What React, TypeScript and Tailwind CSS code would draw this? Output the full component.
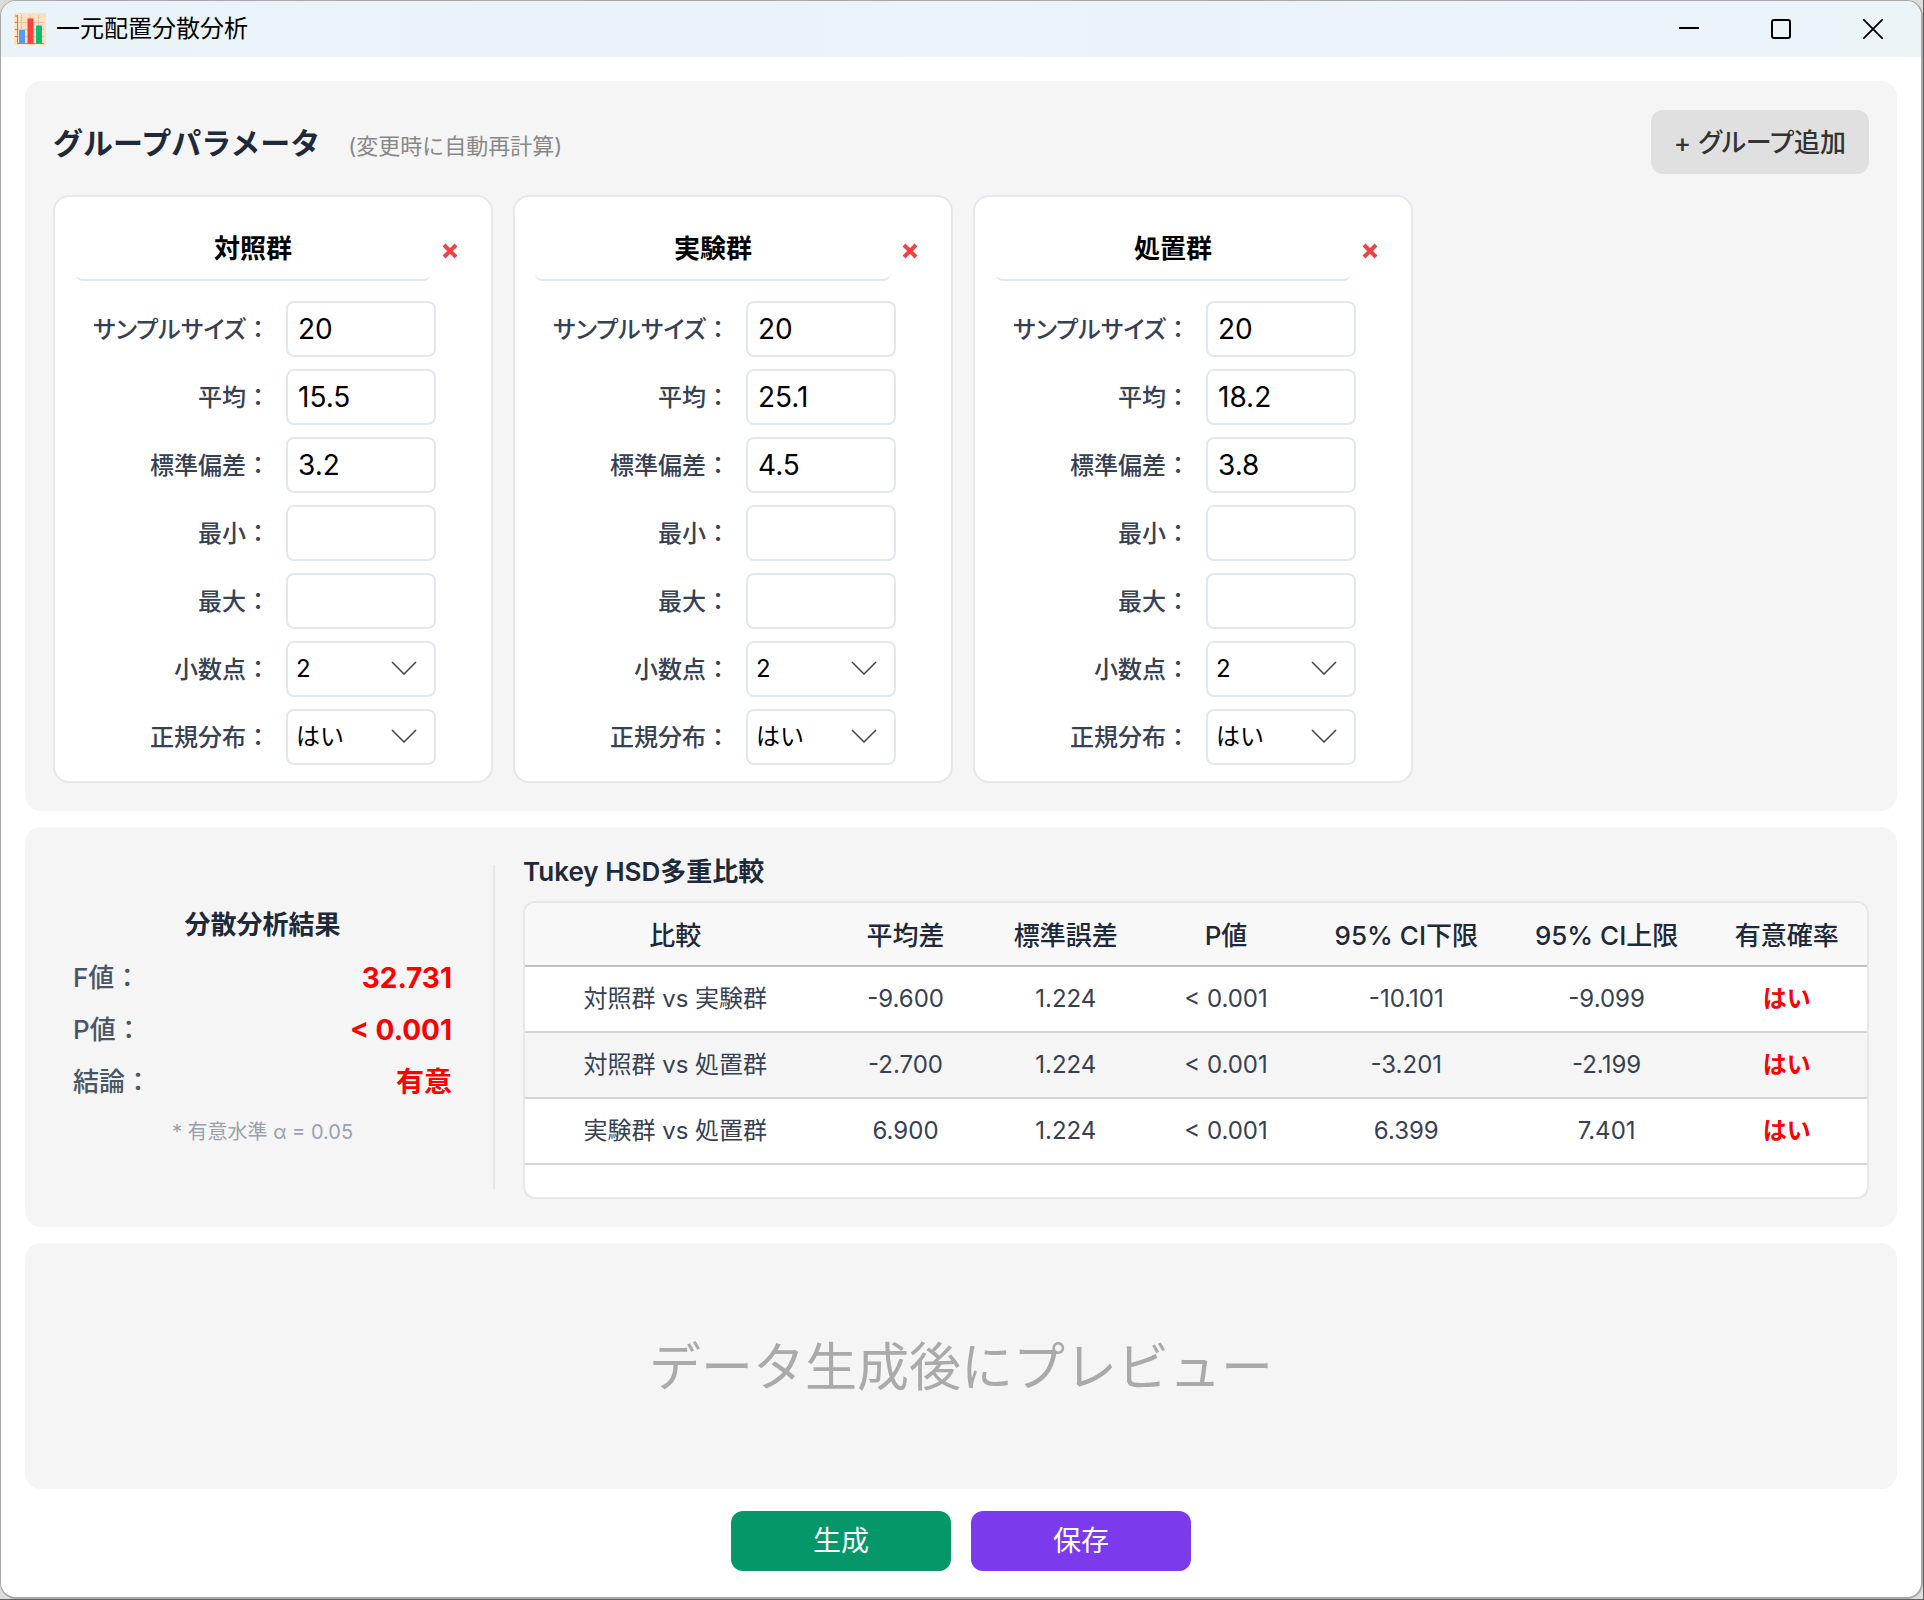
import { useId, useState } from "react";
import clsx from "clsx";

type Group = {
  id: number;
  name: string;
  size: string;
  mean: string;
  sd: string;
  min: string;
  max: string;
};

type Comparison = {
  pair: string;
  diff: string;
  se: string;
  p: string;
  lower: string;
  upper: string;
  significant: string;
};

const INITIAL_GROUPS: Group[] = [
  { id: 1, name: "対照群", size: "20", mean: "15.5", sd: "3.2", min: "", max: "" },
  { id: 2, name: "実験群", size: "20", mean: "25.1", sd: "4.5", min: "", max: "" },
  { id: 3, name: "処置群", size: "20", mean: "18.2", sd: "3.8", min: "", max: "" },
];

const FIELDS: { key: "size" | "mean" | "sd" | "min" | "max"; label: string }[] = [
  { key: "size", label: "サンプルサイズ" },
  { key: "mean", label: "平均" },
  { key: "sd", label: "標準偏差" },
  { key: "min", label: "最小" },
  { key: "max", label: "最大" },
];

const COLUMNS = [
  { label: "比較", width: "w-[300px]" },
  { label: "平均差", width: "w-[160px]" },
  { label: "標準誤差", width: "w-[160px]" },
  { label: "P値", width: "w-[160px]" },
  { label: "95% CI下限", width: "w-[200px]" },
  { label: "95% CI上限", width: "w-[200px]" },
  { label: "有意確率", width: "w-[160px]" },
];

const COMPARISONS: Comparison[] = [
  { pair: "対照群 vs 実験群", diff: "-9.600", se: "1.224", p: "< 0.001", lower: "-10.101", upper: "-9.099", significant: "はい" },
  { pair: "対照群 vs 処置群", diff: "-2.700", se: "1.224", p: "< 0.001", lower: "-3.201", upper: "-2.199", significant: "はい" },
  { pair: "実験群 vs 処置群", diff: "6.900", se: "1.224", p: "< 0.001", lower: "6.399", upper: "7.401", significant: "はい" },
];

function ChartIcon() {
  return (
    <svg width="32" height="32" viewBox="0 0 32 32" aria-hidden="true">
      <rect width="32" height="32" rx="1" fill="#fee0c0" />
      <path d="M2 9.5h28M2 16.5h28M2 23.5h28M7.5 2v28M16 2v28M24.5 2v28" stroke="#dcc4ac" strokeWidth="1" />
      <path d="M3.500 2v28.500H30M1 3h3M1 9.5h3M1 16.5h3M1 23.5h3" fill="none" stroke="#a08f80" strokeWidth="1" />
      <rect x="5" y="17" width="6" height="13.500" fill="#4f9cf9" />
      <rect x="13.500" y="5.500" width="6" height="25" fill="#f8403f" />
      <rect x="22" y="12.500" width="6" height="18" fill="#0cbc70" />
    </svg>
  );
}

function TitleBar() {
  return (
    <header className="flex h-14 items-center justify-between bg-linear-to-r from-[#eaf4f8] via-[#ebf3fb] to-[#ebf5f8] pr-0.5 pl-[13px]">
      <div className="flex items-center gap-2.5">
        <ChartIcon />
        <h1 className="text-2xl text-black">一元配置分散分析</h1>
      </div>
      <div className="flex h-full">
        <button type="button" aria-label="最小化" className="flex w-[92px] items-center justify-center">
          <svg width="20" height="20" viewBox="0 0 20 20">
            <path d="M0 9h20" stroke="#000" strokeWidth="2" />
          </svg>
        </button>
        <button type="button" aria-label="最大化" className="flex w-[92px] items-center justify-center">
          <svg width="20" height="20" viewBox="0 0 20 20">
            <rect x="1" y="1" width="18" height="18" rx="2" fill="none" stroke="#000" strokeWidth="2" />
          </svg>
        </button>
        <button type="button" aria-label="閉じる" className="flex w-[92px] items-center justify-center">
          <svg width="20" height="20" viewBox="0 0 20 20">
            <path d="M0 0l20 20M20 0L0 20" stroke="#000" strokeWidth="1.800" />
          </svg>
        </button>
      </div>
    </header>
  );
}

function FieldLabel({ htmlFor, text }: { htmlFor: string; text: string }) {
  return (
    <label htmlFor={htmlFor} className="flex-1 pt-0.5 text-right text-2xl font-medium whitespace-nowrap text-gray-700">
      <span className="[font-feature-settings:'palt']">{text}</span>：
    </label>
  );
}

function SelectField({ label, options }: { label: string; options: string[] }) {
  const id = useId();
  return (
    <div className="flex items-center gap-4">
      <FieldLabel htmlFor={id} text={label} />
      <div className="relative">
        <select
          id={id}
          className="block h-14 w-[150px] appearance-none rounded-lg border-2 border-slate-200 bg-white px-2 text-2xl text-black"
        >
          {options.map((o) => (
            <option key={o}>{o}</option>
          ))}
        </select>
        <svg
          width="26"
          height="14"
          viewBox="0 0 26 14"
          className="pointer-events-none absolute top-5 right-[19px]"
          aria-hidden="true"
        >
          <path d="M1 1l12 12L25 1" fill="none" stroke="#444" strokeWidth="1.500" />
        </svg>
      </div>
    </div>
  );
}

function GroupCard({ group, onRemove }: { group: Group; onRemove: () => void }) {
  const id = useId();
  return (
    <div className="w-[440px] rounded-2xl border-2 border-gray-200 bg-white px-5 pt-5 pb-4">
      <div className="flex items-center">
        <input
          aria-label="グループ名"
          defaultValue={group.name}
          className="h-16 w-[356px] rounded-lg border-b-2 border-slate-200 pb-1 text-center text-[26px] font-bold text-black"
        />
        <button
          type="button"
          aria-label={`${group.name}を削除`}
          onClick={onRemove}
          className="flex h-10 w-[38px] items-center justify-center pt-1"
        >
          <svg width="16" height="16" viewBox="0 0 16 16">
            <path d="M2 2l12 12M14 2L2 14" stroke="#ef4444" strokeWidth="4" />
          </svg>
        </button>
      </div>
      <div className="mt-5 mr-[35px] flex flex-col gap-3">
        {FIELDS.map((f) => (
          <div key={f.key} className="flex items-center gap-4">
            <FieldLabel htmlFor={`${id}-${f.key}`} text={f.label} />
            <input
              id={`${id}-${f.key}`}
              defaultValue={group[f.key]}
              className="h-14 w-[150px] rounded-lg border-2 border-slate-200 bg-white px-2.5 text-[28px] text-black"
            />
          </div>
        ))}
        <SelectField label="小数点" options={["2", "0", "1", "3"]} />
        <SelectField label="正規分布" options={["はい", "いいえ"]} />
      </div>
    </div>
  );
}

function ResultRow({ label, value }: { label: string; value: string }) {
  return (
    <div className="flex h-[52px] items-center justify-between">
      <dt className="text-[26px] font-medium text-gray-600">{label}：</dt>
      <dd className="text-[28px] font-bold text-[#ff0000]">{value}</dd>
    </div>
  );
}

function ComparisonTable() {
  return (
    <div className="flex-1 overflow-hidden rounded-xl border-2 border-gray-200 bg-white">
      <table className="w-full table-fixed border-collapse text-center">
        <thead>
          <tr className="h-[63px] border-b-2 border-[#c0c2c8] bg-[#f8f8f8]">
            {COLUMNS.map((c) => (
              <th key={c.label} className={clsx(c.width, "pt-0.5 text-[26px] font-medium text-gray-800")}>
                {c.label}
              </th>
            ))}
          </tr>
        </thead>
        <tbody>
          {COMPARISONS.map((row, i) => (
            <tr
              key={row.pair}
              className={clsx("h-[66px] border-b-2 border-[#d4d5d7] text-2xl text-gray-700", i % 2 === 1 && "bg-neutral-100")}
            >
              <td>{row.pair}</td>
              <td>{row.diff}</td>
              <td>{row.se}</td>
              <td>{row.p}</td>
              <td>{row.lower}</td>
              <td>{row.upper}</td>
              <td className="font-bold text-[#ff0000]">{row.significant}</td>
            </tr>
          ))}
        </tbody>
      </table>
    </div>
  );
}

export default function App() {
  const [groups, setGroups] = useState(INITIAL_GROUPS);

  const addGroup = () =>
    setGroups((gs) => [
      ...gs,
      { id: Date.now(), name: `群${gs.length + 1}`, size: "20", mean: "", sd: "", min: "", max: "" },
    ]);

  return (
    <div className="flex min-h-screen flex-col border-r border-b border-[#606060] bg-[#dcdcdc] font-[Inter,'Noto_Sans_CJK_JP',sans-serif]">
      <div className="flex flex-1 flex-col overflow-hidden rounded-2xl border border-r-2 border-b-2 border-[#a8a8a8] bg-white">
        <TitleBar />
        <main className="flex flex-1 flex-col gap-4 px-6 pt-6 pb-[26px]">
          <section className="rounded-2xl bg-neutral-100 p-7">
            <div className="mb-5 flex h-[66px] items-center justify-between">
              <div className="flex items-baseline gap-7 pt-0.5">
                <h2 className="text-[30px] font-bold text-gray-800">グループパラメータ</h2>
                <p className="text-[22px] text-[#888888]">(変更時に自動再計算)</p>
              </div>
              <button
                type="button"
                onClick={addGroup}
                className="h-16 rounded-xl bg-[#e0e0e0] px-[23px] text-[26px] font-medium text-[#333333] [font-feature-settings:'palt']"
              >
                + グループ追加
              </button>
            </div>
            <div className="flex flex-wrap gap-5">
              {groups.map((g) => (
                <GroupCard
                  key={g.id}
                  group={g}
                  onRemove={() => setGroups((gs) => gs.filter((x) => x.id !== g.id))}
                />
              ))}
            </div>
          </section>

          <section className="flex h-[400px] rounded-2xl bg-neutral-100 p-7">
            <div className="my-2.5 flex w-[442px] shrink-0 flex-col justify-center border-r-2 border-gray-200 pr-[41px] pb-1 pl-5">
              <h3 className="mb-2 text-center text-[26px] font-bold text-gray-800">分散分析結果</h3>
              <dl>
                <ResultRow label="F値" value="32.731" />
                <ResultRow label="P値" value="< 0.001" />
                <ResultRow label="結論" value="有意" />
              </dl>
              <p className="mt-2.5 text-center text-xl text-gray-400">* 有意水準 α = 0.05</p>
            </div>
            <div className="ml-7 flex min-w-0 flex-1 flex-col">
              <h3 className="mb-3 h-[34px] text-[26px] leading-[34px] font-semibold text-gray-800">Tukey HSD多重比較</h3>
              <ComparisonTable />
            </div>
          </section>

          <section className="flex min-h-[200px] flex-1 items-center justify-center rounded-2xl bg-neutral-100 pt-1">
            <p className="text-[52px] text-[#aaaaaa]">データ生成後にプレビュー</p>
          </section>

          <div className="mt-1.5 flex justify-center gap-5">
            <button type="button" className="h-[60px] w-[220px] rounded-xl bg-[#059669] text-[28px] text-white">
              生成
            </button>
            <button type="button" className="h-[60px] w-[220px] rounded-xl bg-[#7c3aed] text-[28px] text-white">
              保存
            </button>
          </div>
        </main>
      </div>
    </div>
  );
}
